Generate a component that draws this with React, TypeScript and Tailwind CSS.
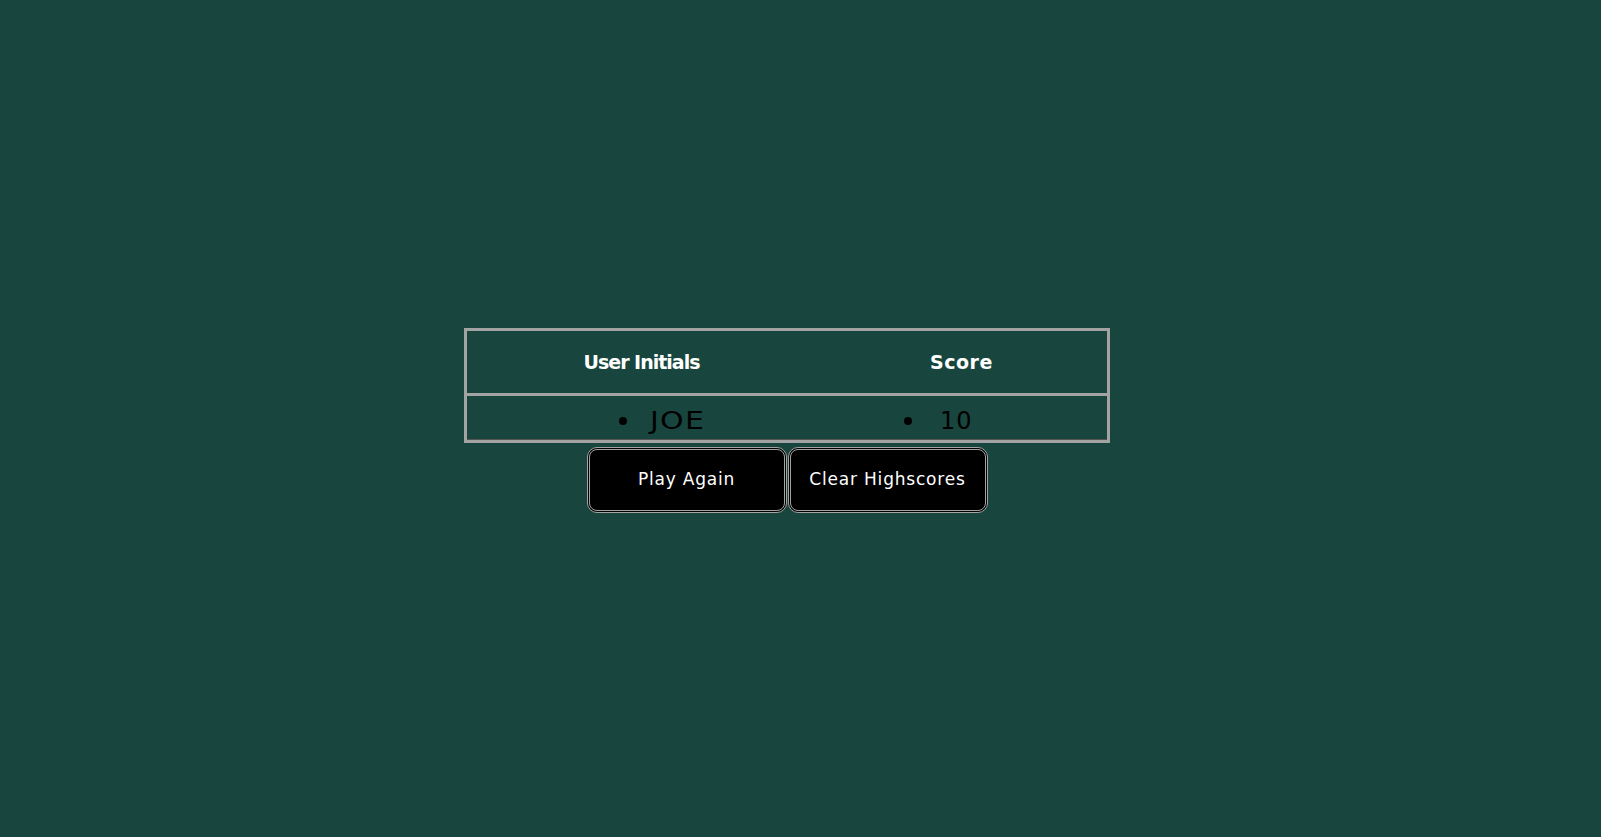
export default function App() {
  return (
    <div className="min-h-screen w-full bg-[#18463e] flex flex-col items-center pt-[328px] pr-[27px] font-['DejaVu_Sans',sans-serif]">
      <div className="w-[646px] border-[3px] border-[#a3a3a3]">
        <div className="grid grid-cols-[349px_1fr] h-[65px] items-center border-b-[3px] border-[#a3a3a3] text-white font-bold text-[19px] tracking-[-1px]">
          <div className="text-center pt-[1px]">User Initials</div>
          <div className="text-center pt-[1px] tracking-[0.5px]">Score</div>
        </div>
        <div className="grid grid-cols-[349px_1fr] h-[44px] items-center border-b border-[#555] text-black text-[24px] pt-[6px]">
          <div className="flex items-center gap-[23px] pl-[152px]">
            <span className="w-[8px] h-[8px] rounded-full bg-black" />
            <span className="inline-block origin-left scale-x-[1.25] tracking-[1px]">JOE</span>
          </div>
          <div className="flex items-center gap-[28px] pl-[88px]">
            <span className="w-[8px] h-[8px] rounded-full bg-black" />
            <span className="tracking-[1px]">10</span>
          </div>
        </div>
      </div>
      <div className="flex gap-[1px] mt-[4px]">
        <button className="w-[200px] h-[66px] bg-black text-white text-[17px] tracking-[0.8px] rounded-[10px] border-[3px] border-double border-[#a3a3a3]">
          Play Again
        </button>
        <button className="w-[200px] h-[66px] bg-black text-white text-[17px] tracking-[0.8px] rounded-[10px] border-[3px] border-double border-[#a3a3a3]">
          Clear Highscores
        </button>
      </div>
    </div>
  )
}
